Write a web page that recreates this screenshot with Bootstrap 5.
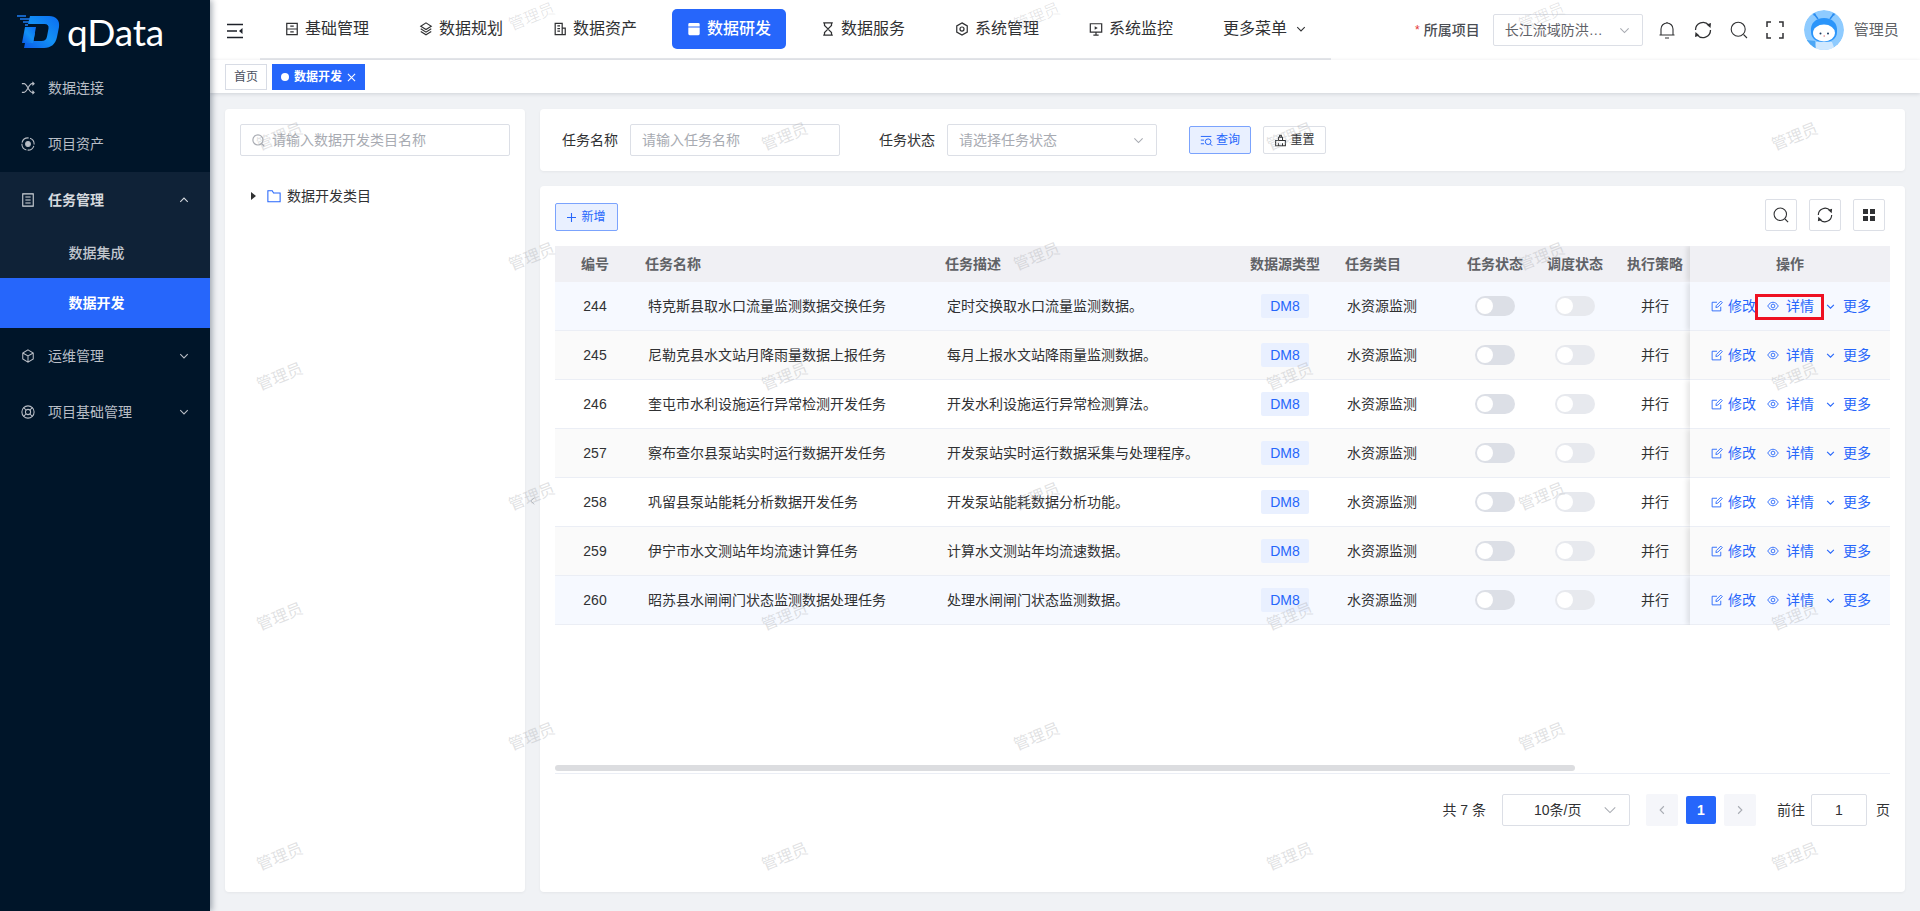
<!DOCTYPE html>
<html lang="zh-CN">
<head>
<meta charset="utf-8">
<title>qData</title>
<link href="https://cdn.jsdelivr.net/npm/bootstrap@5.3.0/dist/css/bootstrap.min.css" rel="stylesheet">
<style>
html,body{height:100%;}
body{font-family:"Liberation Sans","Noto Sans CJK SC",sans-serif;font-size:14px;color:#303133;background:#f0f2f5;overflow:hidden;}
.ico{width:14px;height:14px;fill:none;stroke:currentColor;stroke-width:1.2;flex:none;display:block;}
.app-shell{width:1920px;height:911px;}
/* sidebar */
.side{width:210px;flex:none;background:#001529;color:#c3c8cf;box-shadow:2px 0 6px rgba(0,21,41,.35);position:relative;z-index:5;}
.brand{height:64px;padding:15px 0 0 17px;gap:6px;}
.brand-name{font-family:"Lato","Liberation Sans",sans-serif;font-size:37px;line-height:33px;color:#fff;letter-spacing:-.2px;font-weight:400;}
.brand-logo{width:44px;height:34px;display:block;flex:none;}
.side-item{height:56px;padding:0 20px 0 21px;gap:13px;color:#b9bec6;}
.side-item .ico{width:14px;height:14px;}
.side-item .chev{width:10px;height:10px;margin-left:auto;margin-right:1px;stroke-width:1.7;}
.side-open{background:#0f2237;}
.side-open .side-item{color:#d5d9de;font-weight:600;height:56px;}
.side-sub{height:50px;padding-left:68.5px;color:#c2c7ce;font-weight:500;}
.side-sub.on{background:#2666fb;color:#fff;font-weight:700;}
.side-item.first{margin-top:-4px;height:56px;}
/* header */
.work{min-width:0;}
.top-head{height:60px;background:#fff;flex:none;}
.burger{width:16px;height:16px;margin:1px 0 0 17px;color:#1d2129;flex:none;}
.burger-wrap{width:50px;}
.top-nav{width:1071px;height:60px;border-bottom:2px solid #e6e8ec;gap:20px;flex:none;padding-left:10px;}
.top-link{width:114px;height:40px;margin-top:-1px;padding-left:15px;gap:6px;border-radius:5px;color:#303133;font-size:16px;border:0;background:transparent;}
.top-link.on{background:#2666fb;color:#fff;font-weight:500;}
.top-link.more{width:auto;padding-left:15px;gap:9px;}
.top-link.more .ico{width:10px;height:10px;stroke-width:1.7;}
.top-right{padding-left:84px;}
.req{color:#e43434;font-size:12px;margin-right:4px;}
.proj-label{font-size:14px;font-weight:500;color:#4a4d53;margin-right:13px;}
.field{height:32px;border:1px solid #dcdfe6;border-radius:2px;background:#fff;color:#a8abb2;padding:0 12px 0 11px;font-size:14px;}
.field .ico{width:11px;height:11px;margin-left:auto;color:#a8abb2;stroke-width:1.6;}
.proj-select{width:150px;color:#5f6268;margin-right:15px;}
.tool-ico{width:18px;height:18px;color:#303133;margin-right:18px;stroke-width:1.1;}
.tool-last{margin-right:20px;}
.avatar{width:40px;height:40px;border-radius:50%;flex:none;display:block;}
.user-name{margin-left:10px;font-size:15px;color:#606266;}
/* tabs */
.tab-bar{height:33px;background:#fff;flex:none;padding:4px 0 0 15px;gap:5px;box-shadow:0 1px 4px rgba(0,21,41,.14);position:relative;z-index:2;}
.tab-item{height:26px;border:1px solid #d8dce5;font-size:12px;color:#495060;padding:0 8px;}
.tab-item.on{background:#2666fb;border-color:#2666fb;color:#fff;font-weight:700;}
.tab-dot{width:8px;height:8px;background:#fff;border-radius:50%;margin-right:5px;}
.tab-x{width:9px;height:9px;margin-left:5px;stroke-width:1.2;}
/* content */
.content{flex:1;min-height:0;padding:16px 15px 19px;gap:15px;}
.pane{background:#fff;border:0;border-radius:4px;box-shadow:0 1px 3px rgba(0,0,0,.05);}
.tree-pane{width:300px;flex:none;padding:15px;position:relative;}
.tree-search{height:32px;width:270px;padding-left:11px;gap:7px;}
.tree-search .ico{margin:0;width:13px;height:13px;}
.tree-row{margin-top:32px;padding-left:11px;color:#303133;height:16px;}
.caret{width:0;height:0;border-left:5px solid #303133;border-top:4px solid transparent;border-bottom:4px solid transparent;margin-right:11px;}
.folder{width:14px;height:14px;color:#2666fb;margin-right:6px;}
.collapse-mark{position:absolute;right:-12px;top:384px;width:9px;height:16px;color:#9a9ea6;}
.main-col{min-width:0;gap:15px;}
.filter-pane{height:62px;flex:none;padding:15px 22px;}
.filter-label{color:#303133;margin-right:12px;white-space:nowrap;}
.query-gap{margin-left:39px;}
.filter-input{width:210px;}
.small-btn{height:28px;font-size:12px;padding:0;display:flex;align-items:center;justify-content:center;gap:3px;border-radius:2px;--bs-btn-font-size:12px;}
.btn-tint{background:#e9f0ff;border:1px solid #7ba3fd;color:#2666fb;}
.btn-plain{background:#fff;border:1px solid #dcdfe6;color:#303133;}
.query-btn{width:62px;margin-left:32px;}
.reset-btn{width:63px;margin-left:12px;}
.small-btn .ico{width:13px;height:13px;}
.list-pane{flex:1;min-height:0;padding:13px 15px 0;}
.list-tools{height:33px;margin-bottom:14px;}
.add-btn{width:63px;margin-top:4px;gap:5px;}
.add-btn .ico{width:9px;height:9px;}
.tools-right{margin-right:5px;}
.sq-btn{width:32px;height:32px;padding:0;border:1px solid #dcdfe6;border-radius:2px;background:#fff;display:flex;align-items:center;justify-content:center;color:#303133;}
.sq-btn .ico{width:16px;height:16px;}
.sq-btn+.sq-btn{margin-left:12px;}
.grid-ico{fill:#303133;stroke:none;width:12px!important;height:12px!important;}
.data-table{width:1335px;table-layout:fixed;margin:0;font-size:14px;border-collapse:separate;border-spacing:0;}
.data-table th{height:36px;background:#f0f0f4;color:#606266;font-weight:700;padding:0;border:0;vertical-align:middle;text-align:center;white-space:nowrap;}
.data-table td{height:49px;padding:0;border:0;border-bottom:1px solid #ebeef5;vertical-align:middle;text-align:center;color:#303133;white-space:nowrap;background:#fff;}
.data-table tbody tr:nth-child(even) td{background:#fafafa;}
.data-table tbody tr.row-tint td{background:#f6f9ff;}
.data-table .ta-l{text-align:left;}
.data-table th.pl-name{padding-left:10px;} .data-table td.pl-name{padding-left:13px;}
.data-table th.pl-desc{padding-left:10px;} .data-table td.pl-desc{padding-left:12px;}
.data-table th.pl-kind{padding-left:15px;} .data-table td.pl-kind{padding-left:17px;}
.data-table th.pl-exec,.data-table td.pl-exec{padding-left:5px;}
.data-table .op-col{box-shadow:-3px 0 5px rgba(0,0,0,.1);clip-path:inset(0 0 0 -8px);position:relative;}
.db-tag{display:inline-block;width:48px;height:24px;line-height:24px;background:#e9f0ff;color:#2666fb;border-radius:2px;text-align:center;}
.sw{display:block;width:40px;height:20px;border-radius:10px;background:#dcdfe6;margin:0 auto;padding:2px;}
.sw::before{content:"";display:block;width:16px;height:16px;border-radius:50%;background:#fff;}
.sw.off{background:#e7e9ee;}
.op-wrap{padding-left:21px;}
.op-link{color:#2666fb;text-decoration:none;display:flex;align-items:center;gap:7px;}
.op-link .ico{width:12px;height:12px;}
.op-edit{gap:5px;}
.op-link+.op-link{margin-left:11px;}
.op-more{gap:8px;margin-left:12px!important;}
.op-more .ico{width:9px;height:9px;stroke-width:1.9;}
.flagged{position:relative;}
.flagged::after{content:"";position:absolute;left:-12px;top:-2px;right:-10px;bottom:-3px;border:3px solid #ee1122;}
.table-box{height:519px;position:relative;}
.h-scroll{height:8px;}
.h-thumb{width:1020px;height:6px;background:#dcdde0;border-radius:3px;}
.h-rule{height:1px;background:#ebeef5;width:1335px;}
.pager{height:32px;margin-top:20px;width:1335px;justify-content:flex-end;}
.pg-size{width:128px;margin:0 16px 0 16px;color:#303133;padding-left:31px;}
.pg-size .ico{margin-left:auto;width:14px;height:14px;stroke-width:1.2;}
.pg-btn{width:32px;height:32px;background:#f5f6fa;border-radius:2px;color:#a8abb2;display:flex;align-items:center;justify-content:center;border:0;padding:0;}
.pg-btn .ico{width:10px;height:10px;stroke-width:1.7;}
.pg-cur{width:30px;height:28px;background:#2666fb;color:#fff;font-weight:700;border-radius:2px;margin:0 8px;display:flex;align-items:center;justify-content:center;border:0;}
.pg-jump{margin-left:21px;}
.pg-num{width:56px;justify-content:center;margin:0 9px 0 6px;color:#303133;padding:0;}
/* watermark */
.marks{position:absolute;inset:0;z-index:20;pointer-events:none;overflow:hidden;}
.mark-row{height:120px;display:flex;flex:none;}
.mark-row.lead{margin-top:-43px;}
.mark-row.a{padding-left:298px;}
.mark-row.b{padding-left:46px;}
.mark-cell{width:505px;flex:none;height:120px;display:flex;align-items:center;}
.mark-text{display:block;width:48px;white-space:nowrap;font-size:16px;line-height:20px;color:rgba(170,172,176,.36);transform:rotate(-22deg);transform-origin:center;}
</style>
</head>
<body>
<svg width="0" height="0" class="position-absolute">
<defs>
<symbol id="i-shuffle" viewBox="0 0 16 16"><path d="M1 3h2.5c3.500 0 5.500 10 9 10H15M1 13h2.500c3.500 0 5.500-10 9-10H15M13 1l2 2-2 2M13 11l2 2-2 2"/></symbol>
<symbol id="i-asset" viewBox="0 0 16 16"><path d="M8 1a7 7 0 1 0 0 14 7 7 0 0 0 0-14z" stroke-dasharray="9 1.500"/><circle cx="8" cy="8" r="2.700" fill="currentColor"/></symbol>
<symbol id="i-doc" viewBox="0 0 16 16"><path d="M2 1h12v14H2zM5 4.500h6M5 8h6M5 11.500h6"/></symbol>
<symbol id="i-cube" viewBox="0 0 16 16"><path d="M8 1l6 3.500v7L8 15l-6-3.500v-7zM2 4.500L8 8l6-3.500M8 8v7"/></symbol>
<symbol id="i-buoy" viewBox="0 0 16 16"><circle cx="8" cy="8" r="7"/><circle cx="8" cy="8" r="3"/><path d="M3 3l3 3M13 3l-3 3M3 13l3-3M13 13l-3-3"/></symbol>
<symbol id="i-down" viewBox="0 0 16 16"><path d="M2 5l6 6 6-6"/></symbol>
<symbol id="i-up" viewBox="0 0 16 16"><path d="M2 11l6-6 6 6"/></symbol>
<symbol id="i-left" viewBox="0 0 16 16"><path d="M11 2L5 8l6 6"/></symbol>
<symbol id="i-right" viewBox="0 0 16 16"><path d="M5 2l6 6-6 6"/></symbol>
<symbol id="i-burger" viewBox="0 0 16 16"><path d="M0 1.500h16M0 8h10M0 14.500h16" stroke-width="1.600"/><path d="M15.500 5v6L12 8z" fill="currentColor" stroke="none"/></symbol>
<symbol id="i-base" viewBox="0 0 16 16"><path d="M2 1.500h12v13H2zM2 8h12M6 4.700h4M6 11.300h4" stroke-width="1.400"/></symbol>
<symbol id="i-layers" viewBox="0 0 16 16"><path d="M8 1l6 3.800L8 8.600 2 4.800zM2 7.800l6 3.800 6-3.800M2 10.800l6 3.800 6-3.800" stroke-width="1.300"/></symbol>
<symbol id="i-asset2" viewBox="0 0 16 16"><path d="M10.500 14.500h-8v-13h8zM10.500 7h3.500v7.500h-3.500M5 4.500h3M5 7.500h3M5 10.500h3" stroke-width="1.400"/></symbol>
<symbol id="i-dev" viewBox="0 0 16 16"><path d="M3 1h10a1.500 1.500 0 0 1 1.500 1.500V5h-13V2.500A1.500 1.500 0 0 1 3 1zM1.500 6.200h13v7.300A1.500 1.500 0 0 1 13 15H3a1.500 1.500 0 0 1-1.500-1.500z" fill="currentColor" stroke="none"/></symbol>
<symbol id="i-glass" viewBox="0 0 16 16"><path d="M2.500 1h11M2.500 15h11M4 1v3l4 4 4-4V1M4 15v-3l4-4 4 4v3" stroke-width="1.400"/></symbol>
<symbol id="i-hex" viewBox="0 0 16 16"><path d="M8 1l6 3.500v7L8 15l-6-3.500v-7z" stroke-width="1.400"/><circle cx="8" cy="8" r="2.300" stroke-width="1.400"/></symbol>
<symbol id="i-screen" viewBox="0 0 16 16"><path d="M1.500 2h13v9.500h-13zM8 11.500V15M5 15h6" stroke-width="1.400"/><path d="M6.500 4.800l3.500 2-3.500 2z" fill="currentColor" stroke="none"/></symbol>
<symbol id="i-bell" viewBox="0 0 18 18"><path d="M3 14V8a6 6 0 0 1 12 0v6M1.500 14h15M7 17h4"/><path d="M9 2V1"/></symbol>
<symbol id="i-refresh" viewBox="0 0 18 18"><path d="M14.800 4.200A7.500 7.500 0 0 0 1.500 9M3.200 13.800A7.500 7.500 0 0 0 16.500 9" stroke-width="1.300"/><path d="M12.500 3.500l4.500-1.500-.5 5zM5.500 14.500l-4.500 1.500.5-5z" fill="currentColor" stroke="none"/></symbol>
<symbol id="i-search" viewBox="0 0 18 18"><circle cx="8.200" cy="8.200" r="7"/><path d="M13.500 13.500L17 17"/></symbol>
<symbol id="i-full" viewBox="0 0 18 18"><path d="M1 6V1h4M13 1h4v5M17 12v5h-4M5 17H1v-5" stroke-width="1.500"/></symbol>
<symbol id="i-x" viewBox="0 0 10 10"><path d="M1 1l8 8M9 1L1 9"/></symbol>
<symbol id="i-folder" viewBox="0 0 16 16"><path d="M1 2h5l1.500 2.500H15v10H1z"/></symbol>
<symbol id="i-query" viewBox="0 0 16 16"><path d="M1 3h13M1 7.500h4M1 12h4"/><circle cx="10" cy="9.500" r="3.500"/><path d="M12.500 12l2.500 2.500"/></symbol>
<symbol id="i-reset" viewBox="0 0 16 16"><path d="M2 8h12v6.500H2zM5.500 8V4h5v4M7 4V1.500h2V4M5.500 14.500V11.500M10.500 14.500V11.500" stroke-width="1.300"/></symbol>
<symbol id="i-plus" viewBox="0 0 10 10"><path d="M5 0v10M0 5h10"/></symbol>
<symbol id="i-edit" viewBox="0 0 16 16"><path d="M13 9v5.500H1.500V3H8"/><path d="M6.500 10l.5-2.500L13 1.500l2 2L9 9.500z" /></symbol>
<symbol id="i-eye" viewBox="0 0 16 16"><path d="M1 8c2-3.500 4.500-5 7-5s5 1.500 7 5c-2 3.500-4.500 5-7 5s-5-1.500-7-5z"/><circle cx="8" cy="8" r="2.500"/></symbol>
<symbol id="i-grid" viewBox="0 0 12 12"><rect x="0" y="0" width="5" height="5"/><rect x="7" y="0" width="5" height="5"/><rect x="0" y="7" width="5" height="5"/><rect x="7" y="7" width="5" height="5"/></symbol>
<linearGradient id="lg" x1="0" y1="1" x2="1" y2="0"><stop offset="0" stop-color="#0a5be8"/><stop offset=".5" stop-color="#1391f5"/><stop offset="1" stop-color="#0b6cf2"/></linearGradient>
</defs>
</svg>

<div class="app-shell d-flex">
  <aside class="side d-flex flex-column">
    <div class="brand d-flex">
      <svg class="brand-logo" viewBox="0 0 44 34"><path d="M13 1h19c7 0 11 4 10 11l-2 10c-1.500 7-6 11-13 11H7l3-15h8l-1.500 8h8c3 0 5-1.500 5.500-4.500l1.500-8c.5-3-1-4.500-4-4.500H11z" fill="url(#lg)"/><path d="M8 12h11l-3 16H5z" fill="url(#lg)"/><path d="M0 1h9M3 4h10M6 7h6M8 10h3" stroke="#1d7cf2" stroke-width="1.500"/></svg>
      <span class="brand-name">qData</span>
    </div>
    <div class="side-item first d-flex align-items-center"><svg class="ico"><use href="#i-shuffle"/></svg>数据连接</div>
    <div class="side-item d-flex align-items-center"><svg class="ico"><use href="#i-asset"/></svg>项目资产</div>
    <div class="side-open">
      <div class="side-item d-flex align-items-center"><svg class="ico"><use href="#i-doc"/></svg>任务管理<svg class="ico chev"><use href="#i-up"/></svg></div>
      <div class="side-sub d-flex align-items-center">数据集成</div>
      <div class="side-sub on d-flex align-items-center">数据开发</div>
    </div>
    <div class="side-item d-flex align-items-center"><svg class="ico"><use href="#i-cube"/></svg>运维管理<svg class="ico chev"><use href="#i-down"/></svg></div>
    <div class="side-item d-flex align-items-center"><svg class="ico"><use href="#i-buoy"/></svg>项目基础管理<svg class="ico chev"><use href="#i-down"/></svg></div>
  </aside>

  <div class="work flex-grow-1 d-flex flex-column position-relative">
    <header class="top-head d-flex">
      <div class="burger-wrap d-flex align-items-center"><svg class="ico burger"><use href="#i-burger"/></svg></div>
      <nav class="top-nav d-flex align-items-center">
        <span class="top-link d-flex align-items-center"><svg class="ico"><use href="#i-base"/></svg>基础管理</span>
        <span class="top-link d-flex align-items-center"><svg class="ico"><use href="#i-layers"/></svg>数据规划</span>
        <span class="top-link d-flex align-items-center"><svg class="ico"><use href="#i-asset2"/></svg>数据资产</span>
        <span class="top-link on d-flex align-items-center"><svg class="ico"><use href="#i-dev"/></svg>数据研发</span>
        <span class="top-link d-flex align-items-center"><svg class="ico"><use href="#i-glass"/></svg>数据服务</span>
        <span class="top-link d-flex align-items-center"><svg class="ico"><use href="#i-hex"/></svg>系统管理</span>
        <span class="top-link d-flex align-items-center"><svg class="ico"><use href="#i-screen"/></svg>系统监控</span>
        <span class="top-link more d-flex align-items-center">更多菜单<svg class="ico"><use href="#i-down"/></svg></span>
      </nav>
      <div class="top-right d-flex align-items-center">
        <span class="req">*</span><span class="proj-label">所属项目</span>
        <div class="field proj-select d-flex align-items-center">长江流域防洪…<svg class="ico"><use href="#i-down"/></svg></div>
        <svg class="ico tool-ico"><use href="#i-bell"/></svg>
        <svg class="ico tool-ico"><use href="#i-refresh"/></svg>
        <svg class="ico tool-ico"><use href="#i-search"/></svg>
        <svg class="ico tool-ico tool-last"><use href="#i-full"/></svg>
        <svg class="avatar" viewBox="0 0 40 40"><circle cx="20" cy="20" r="20" fill="#8ecbff"/><path d="M14 9l-3-4M26 9l3-4" stroke="#2b8cf0" stroke-width="1.500"/><circle cx="10.500" cy="4.500" r="1.200" fill="#2b8cf0"/><circle cx="29.500" cy="4.500" r="1.200" fill="#2b8cf0"/><path d="M7 22c-1-9 5-14 13-14s14 5 13 14c0 7-6 10-13 10S7 29 7 22z" fill="#2b95fa"/><ellipse cx="20" cy="23" rx="11" ry="8.500" fill="#fff"/><circle cx="16.500" cy="23.500" r="1" fill="#1c3a60"/><circle cx="24" cy="23.500" r="1" fill="#1c3a60"/><path d="M19.500 26h1.500" stroke="#e06a6a"/><path d="M10 40l2-8h16l3 8z" fill="#cfe8ff"/><path d="M2 30l9 1 1 9" fill="#4da7f5"/></svg>
        <span class="user-name">管理员</span>
      </div>
    </header>
    <div class="tab-bar d-flex">
      <div class="tab-item d-flex align-items-center">首页</div>
      <div class="tab-item on d-flex align-items-center"><span class="tab-dot"></span>数据开发<svg class="ico tab-x"><use href="#i-x"/></svg></div>
    </div>
    <div class="content d-flex">
      <section class="pane tree-pane">
        <div class="field tree-search d-flex align-items-center"><svg class="ico"><use href="#i-search"/></svg>请输入数据开发类目名称</div>
        <div class="tree-row d-flex align-items-center"><span class="caret"></span><svg class="ico folder"><use href="#i-folder"/></svg>数据开发类目</div>
        <svg class="ico collapse-mark"><use href="#i-left"/></svg>
      </section>
      <div class="main-col flex-grow-1 d-flex flex-column">
        <section class="pane filter-pane d-flex align-items-center">
          <span class="filter-label">任务名称</span>
          <div class="field filter-input d-flex align-items-center">请输入任务名称</div>
          <span class="filter-label query-gap">任务状态</span>
          <div class="field filter-input d-flex align-items-center">请选择任务状态<svg class="ico"><use href="#i-down"/></svg></div>
          <button type="button" class="btn small-btn btn-tint query-btn"><svg class="ico"><use href="#i-query"/></svg>查询</button>
          <button type="button" class="btn small-btn btn-plain reset-btn"><svg class="ico"><use href="#i-reset"/></svg>重置</button>
        </section>
        <section class="pane list-pane d-flex flex-column">
          <div class="list-tools d-flex align-items-start">
            <button type="button" class="btn small-btn btn-tint add-btn"><svg class="ico"><use href="#i-plus"/></svg>新增</button>
            <div class="ms-auto d-flex tools-right">
              <button type="button" class="sq-btn"><svg class="ico"><use href="#i-search"/></svg></button>
              <button type="button" class="sq-btn"><svg class="ico"><use href="#i-refresh"/></svg></button>
              <button type="button" class="sq-btn"><svg class="ico grid-ico"><use href="#i-grid"/></svg></button>
            </div>
          </div>
          <div class="table-box">
            <table class="table data-table">
              <colgroup><col style="width:80px"><col style="width:300px"><col style="width:305px"><col style="width:90px"><col style="width:125px"><col style="width:80px"><col style="width:80px"><col style="width:75px"><col style="width:200px"></colgroup>
              <thead><tr><th>编号</th><th class="ta-l pl-name">任务名称</th><th class="ta-l pl-desc">任务描述</th><th>数据源类型</th><th class="ta-l pl-kind">任务类目</th><th>任务状态</th><th>调度状态</th><th class="pl-exec">执行策略</th><th class="op-col">操作</th></tr></thead>
              <tbody id="rows"></tbody>
            </table>
          </div>
          <div class="h-scroll"><div class="h-thumb"></div></div>
          <div class="h-rule"></div>
          <div class="pager d-flex align-items-center">
            <span>共 7 条</span>
            <div class="field pg-size d-flex align-items-center">10条/页<svg class="ico"><use href="#i-down"/></svg></div>
            <button type="button" class="pg-btn"><svg class="ico"><use href="#i-left"/></svg></button>
            <button type="button" class="pg-cur">1</button>
            <button type="button" class="pg-btn"><svg class="ico"><use href="#i-right"/></svg></button>
            <span class="pg-jump">前往</span>
            <div class="field pg-num d-flex align-items-center">1</div>
            <span>页</span>
          </div>
        </section>
      </div>
    </div>
    <div class="marks d-flex flex-column" aria-hidden="true" id="marks"></div>
  </div>
</div>

<script>
var data=[
[244,"特克斯县取水口流量监测数据交换任务","定时交换取水口流量监测数据。",1],
[245,"尼勒克县水文站月降雨量数据上报任务","每月上报水文站降雨量监测数据。",0],
[246,"奎屯市水利设施运行异常检测开发任务","开发水利设施运行异常检测算法。",0],
[257,"察布查尔县泵站实时运行数据开发任务","开发泵站实时运行数据采集与处理程序。",0],
[258,"巩留县泵站能耗分析数据开发任务","开发泵站能耗数据分析功能。",0],
[259,"伊宁市水文测站年均流速计算任务","计算水文测站年均流速数据。",0],
[260,"昭苏县水闸闸门状态监测数据处理任务","处理水闸闸门状态监测数据。",2]];
document.getElementById("rows").innerHTML=data.map(function(r){
return '<tr class="'+(r[3]?'row-tint':'')+'"><td>'+r[0]+'</td><td class="ta-l pl-name">'+r[1]+'</td><td class="ta-l pl-desc">'+r[2]+'</td><td><span class="db-tag">DM8</span></td><td class="ta-l pl-kind">水资源监测</td><td><span class="sw"></span></td><td><span class="sw off"></span></td><td class="pl-exec">并行</td><td class="op-col"><div class="op-wrap d-flex align-items-center"><a class="op-link op-edit"><svg class="ico"><use href="#i-edit"/></svg>修改</a><a class="op-link'+(r[3]===1?' flagged':'')+'"><svg class="ico"><use href="#i-eye"/></svg>详情</a><a class="op-link op-more"><svg class="ico"><use href="#i-down"/></svg>更多</a></div></td></tr>';
}).join("");
var h='';
for(var i=0;i<8;i++){
  var odd=i%2===1;
  var cells='';for(var c=0;c<(odd?4:3);c++){cells+='<div class="mark-cell"><span class="mark-text">管理员</span></div>';}
  h+='<div class="mark-row '+(odd?'b':'a')+(i===0?' lead':'')+'">'+cells+'</div>';
}
document.getElementById("marks").innerHTML=h;
</script>
</body>
</html>
